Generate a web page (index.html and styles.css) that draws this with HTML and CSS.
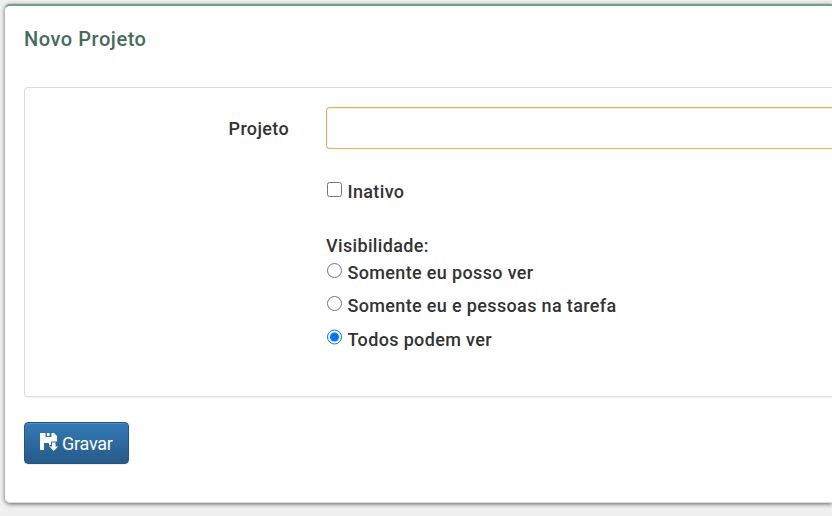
FILE: index.html
```html
<!DOCTYPE html>
<html lang="pt-BR">
<head>
<meta charset="utf-8">
<title>Novo Projeto</title>
<link rel="stylesheet" href="styles.css">
</head>
<body>
<main class="card">
  <h1 class="title">Novo Projeto</h1>
  <form>
    <div class="well">
      <label class="field-label" for="projeto">Projeto</label>
      <div class="fields">
        <input class="text-input" id="projeto" type="text">
        <label class="option inactive"><input type="checkbox"><span>Inativo</span></label>
        <div class="heading">Visibilidade:</div>
        <label class="option"><input type="radio" name="v"><span>Somente eu posso ver</span></label>
        <label class="option"><input type="radio" name="v"><span>Somente eu e pessoas na tarefa</span></label>
        <label class="option"><input type="radio" name="v" checked><span>Todos podem ver</span></label>
      </div>
    </div>
    <button class="save" type="button">
      <svg class="icon" viewBox="0 0 18 18" width="18" height="18"><path fill="#fff" d="M0 0H5.500V4H11.500V0H14L17 3V8.500H11V12H9L10 13.500H9V10H4V17H0ZM7 0H9.500V3H7ZM12 9.500H15.500V13.500H18L13.700 18L9.500 13.500H12Z"/></svg>
      <span>Gravar</span>
    </button>
  </form>
</main>
</body>
</html>
```

FILE: styles.css
```css
* { box-sizing: border-box; }
body {
  margin: 0;
  height: 516px;
  padding: 4px 0 0 5px;
  overflow: hidden;
  background: #f0f0f0;
  color: #333;
  font-family: Roboto, sans-serif;
  font-size: 18px;
}
.card {
  height: 499px;
  padding: 18px 0 18px 19px;
  background: #fff;
  border-top: 2px solid #719f88;
  border-radius: 5px 0 0 5px;
  box-shadow: inset 0 -1px 0 #ddd, 0 1px 4px rgba(0, 0, 0, .6);
}
.title {
  margin: 0 0 33px;
  color: #486b5d;
  font-size: 20px;
  line-height: 30px;
  font-weight: 500;
  letter-spacing: .55px;
}
.well {
  display: flex;
  height: 310px;
  padding-top: 19px;
  border: 1px solid #ddd;
  border-right: 0;
  border-radius: 4px 0 0 4px;
  box-shadow: 0 1px 1px rgba(0, 0, 0, .05);
}
.field-label {
  width: 264px;
  margin-right: 37px;
  padding-top: 9px;
  text-align: right;
  font-weight: 500;
  line-height: 26px;
  letter-spacing: .35px;
}
.fields {
  flex: 1;
  font-weight: 500;
  letter-spacing: .35px;
}
.text-input {
  display: block;
  width: 100%;
  height: 42px;
  border: 1px solid #f0ad4e;
  border-right: 0;
  border-radius: 4px 0 0 4px;
  background: #fff;
  box-shadow: inset 0 1px 1px rgba(0, 0, 0, .075);
}
.option {
  display: flex;
  height: 27px;
  margin-bottom: 6.400px;
  line-height: 27px;
}
.option input {
  flex: none;
  width: 15.500px;
  height: 15.500px;
  margin: 3.500px 5.500px 0 .5px;
}
.inactive { margin: 29px 0 27px; }
.heading { line-height: 27px; }
.save {
  display: flex;
  align-items: center;
  gap: 4px;
  width: 105px;
  height: 42px;
  margin-top: 25px;
  padding: 0 15px;
  border: 1px solid #245580;
  border-radius: 4px;
  background: linear-gradient(#337ab7, #265a88);
  box-shadow: inset 0 1px 0 rgba(255, 255, 255, .15), 0 1px 1px rgba(0, 0, 0, .075);
  color: #fff;
  font: 18px Roboto, sans-serif;
  letter-spacing: -.25px;
}
.icon { flex: none; margin-top: -3px; }
```
